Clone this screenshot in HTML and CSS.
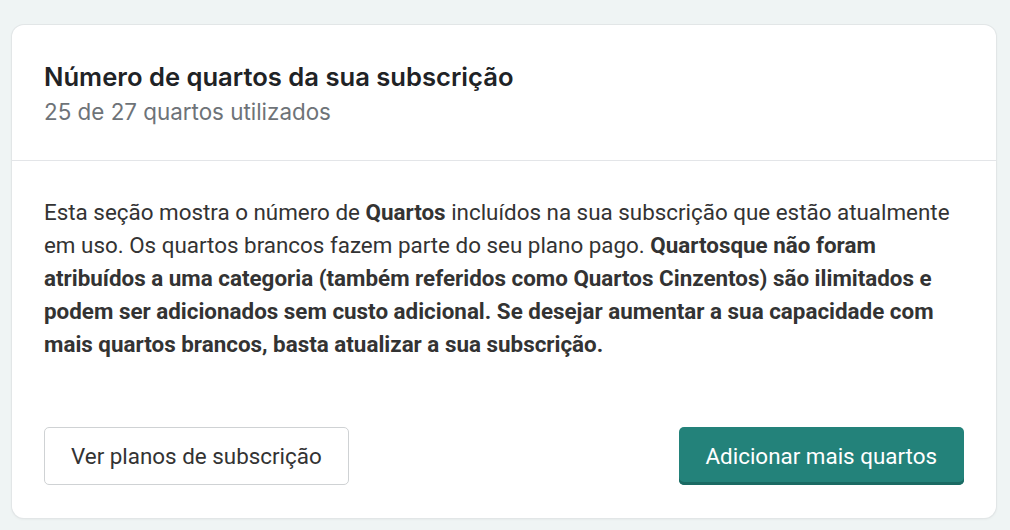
FILE: index.html
```html
<!DOCTYPE html>
<html lang="pt">
<head>
    <meta charset="UTF-8">
    <meta name="viewport" content="width=device-width, initial-scale=1.0">
    <title>Subscrição</title>
    <link rel="stylesheet" href="styles.css">
</head>
<body>
    <div class="card">
        <div class="card-header">
            <div class="title">Número de quartos da sua subscrição</div>
            <div class="subtitle">25 de 27 quartos utilizados</div>
        </div>
        <div class="card-body">
            <p class="text">
                Esta seção mostra o número de <b>Quartos</b> incluídos na sua subscrição que estão atualmente
                em uso. Os quartos brancos fazem parte do seu plano pago. <b>Quartosque não foram
                atribuídos a uma categoria (também referidos como Quartos Cinzentos) são ilimitados e
                podem ser adicionados sem custo adicional. Se desejar aumentar a sua capacidade com
                mais quartos brancos, basta atualizar a sua subscrição.</b>
            </p>
            <div class="actions">
                <button class="button secondary">Ver planos de subscrição</button>
                <button class="button primary">Adicionar mais quartos</button>
            </div>
        </div>
    </div>
</body>
</html>
```

FILE: styles.css
```css
body {
    margin: 0;
    padding: 25px 14px 12px 12px;
    background: #eff4f4;
    font-family: Roboto, sans-serif;
    color: #333;
}
.card {
    background: #fff;
    border-radius: 12px;
    box-shadow: 0 0 0 1px #e2e6e7, 0 1px 3px rgba(0, 0, 0, 0.08);
}
.card-header {
    padding: 36px 32px 33px;
    border-bottom: 1px solid #e3e5e8;
}
.title {
    font-family: Inter, sans-serif;
    font-size: 25.6px;
    font-weight: 600;
    color: #1f2326;
    line-height: 32px;
}
.subtitle {
    font-family: Inter, sans-serif;
    font-size: 22.4px;
    color: #6e7378;
    line-height: 30px;
    margin-top: 4px;
}
.card-body {
    padding: 35px 32px 33px;
}
.text {
    margin: 0;
    font-size: 22.4px;
    line-height: 33px;
    color: #333;
}
.text b {
    font-weight: 700;
}
.actions {
    display: flex;
    justify-content: space-between;
    margin-top: 66px;
}
.button {
    font-family: Roboto, sans-serif;
    font-size: 22.4px;
    height: 58px;
    border-radius: 5px;
    cursor: pointer;
}
.button.secondary {
    background: #fff;
    color: #333;
    border: 1px solid #cfd2d4;
    padding: 0 26px;
}
.button.primary {
    background: #23827a;
    color: #fff;
    border: none;
    box-shadow: inset 0 -3px 0 #1a6a63;
    padding: 0 27px;
}
```
